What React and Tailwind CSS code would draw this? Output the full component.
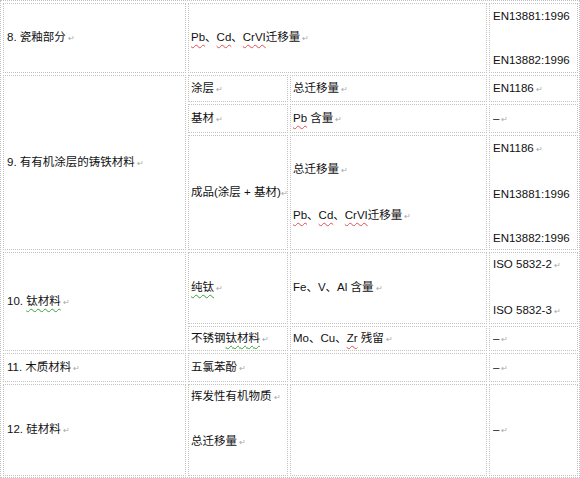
import React from 'react';

const cell = 'border border-dotted border-[#c2c2c2] flex flex-col justify-center pl-[2px] overflow-hidden whitespace-nowrap';

function Mark({ tight }) {
  return <span className={`${tight ? 'ml-0' : 'ml-[2px]'} text-[8px] text-[#a8a8a8]`}>↵</span>;
}

function Red({ children }) {
  return (
    <span className="underline decoration-wavy decoration-[#e05050] decoration-1 underline-offset-[3px]">
      {children}
    </span>
  );
}

function Green({ children }) {
  return (
    <span className="underline decoration-wavy decoration-[#3aa03a] decoration-1 underline-offset-[3px]">
      {children}
    </span>
  );
}

function Blank() {
  return <div className="h-[22px]" />;
}

export default function App() {
  return (
    <div
      className="w-[580px] h-[478px] overflow-hidden bg-white text-[11.5px] leading-[22px] text-[#111]"
      style={{ fontFamily: '"Liberation Sans", "Noto Sans CJK SC", sans-serif' }}
    >
      <div className="grid grid-cols-[183px_100px_197px_89px] grid-rows-[70px_27px_29px_115px_72px_25px_29px_92px] gap-[2px] border border-dotted border-[#c2c2c2] pt-[2px] pl-[2px] pr-[1px] pb-[1px]">
        {/* 8 */}
        <div className={`${cell} pl-[3px]`}>
          <div>8. 瓷釉部分<Mark /></div>
        </div>
        <div className={`${cell} col-span-2`}>
          <div>
            <Red>Pb</Red>、<Red>Cd</Red>、<Red>CrVI</Red>迁移量<Mark />
          </div>
        </div>
        <div className={`${cell} pl-[3px]`}>
          <div>EN13881:1996</div>
          <Blank />
          <div>EN13882:1996</div>
        </div>

        {/* 9 */}
        <div className={`${cell} row-span-3 pl-[3px]`}>
          <div>9. 有有机涂层的铸铁材料<Mark /></div>
        </div>
        <div className={cell}>
          <div>涂层<Mark /></div>
        </div>
        <div className={cell}>
          <div>总迁移量<Mark /></div>
        </div>
        <div className={`${cell} pl-[3px]`}>
          <div>EN1186<Mark /></div>
        </div>

        <div className={cell}>
          <div>基材<Mark /></div>
        </div>
        <div className={cell}>
          <div><Red>Pb</Red> 含量<Mark /></div>
        </div>
        <div className={`${cell} pl-[3px]`}>
          <div>–<Mark /></div>
        </div>

        <div className={cell}>
          <div>成品(涂层 + 基材)<Mark tight /></div>
        </div>
        <div className={cell}>
          <div>总迁移量<Mark /></div>
          <Blank />
          <div>
            <Red>Pb</Red>、<Red>Cd</Red>、<Red>CrVI</Red>迁移量<Mark />
          </div>
        </div>
        <div className={`${cell} pl-[3px]`}>
          <div>EN1186<Mark /></div>
          <Blank />
          <div>EN13881:1996</div>
          <Blank />
          <div>EN13882:1996</div>
        </div>

        {/* 10 */}
        <div className={`${cell} row-span-2 pl-[3px]`}>
          <div>10. <Green>钛材料</Green><Mark /></div>
        </div>
        <div className={cell}>
          <div><Green>纯钛</Green><Mark /></div>
        </div>
        <div className={cell}>
          <div>Fe、V、Al 含量<Mark /></div>
        </div>
        <div className={`${cell} pl-[3px]`}>
          <div>ISO 5832-2<Mark /></div>
          <Blank />
          <div>ISO 5832-3<Mark /></div>
        </div>

        <div className={cell}>
          <div>不锈钢<Green>钛材料</Green><Mark /></div>
        </div>
        <div className={cell}>
          <div>Mo、Cu、<Red>Zr</Red> 残留<Mark /></div>
        </div>
        <div className={`${cell} pl-[3px]`}>
          <div>–<Mark /></div>
        </div>

        {/* 11 */}
        <div className={`${cell} pl-[3px]`}>
          <div>11. 木质材料<Mark /></div>
        </div>
        <div className={cell}>
          <div>五氯苯酚<Mark /></div>
        </div>
        <div className={cell} />
        <div className={`${cell} pl-[3px]`}>
          <div>–<Mark /></div>
        </div>

        {/* 12 */}
        <div className={`${cell} pl-[3px]`}>
          <div>12. 硅材料<Mark /></div>
        </div>
        <div className={cell}>
          <div>挥发性有机物质<Mark /></div>
          <Blank />
          <div>总迁移量<Mark /></div>
          <Blank />
        </div>
        <div className={cell} />
        <div className={`${cell} pl-[3px]`}>
          <div>–<Mark /></div>
        </div>
      </div>
    </div>
  );
}
